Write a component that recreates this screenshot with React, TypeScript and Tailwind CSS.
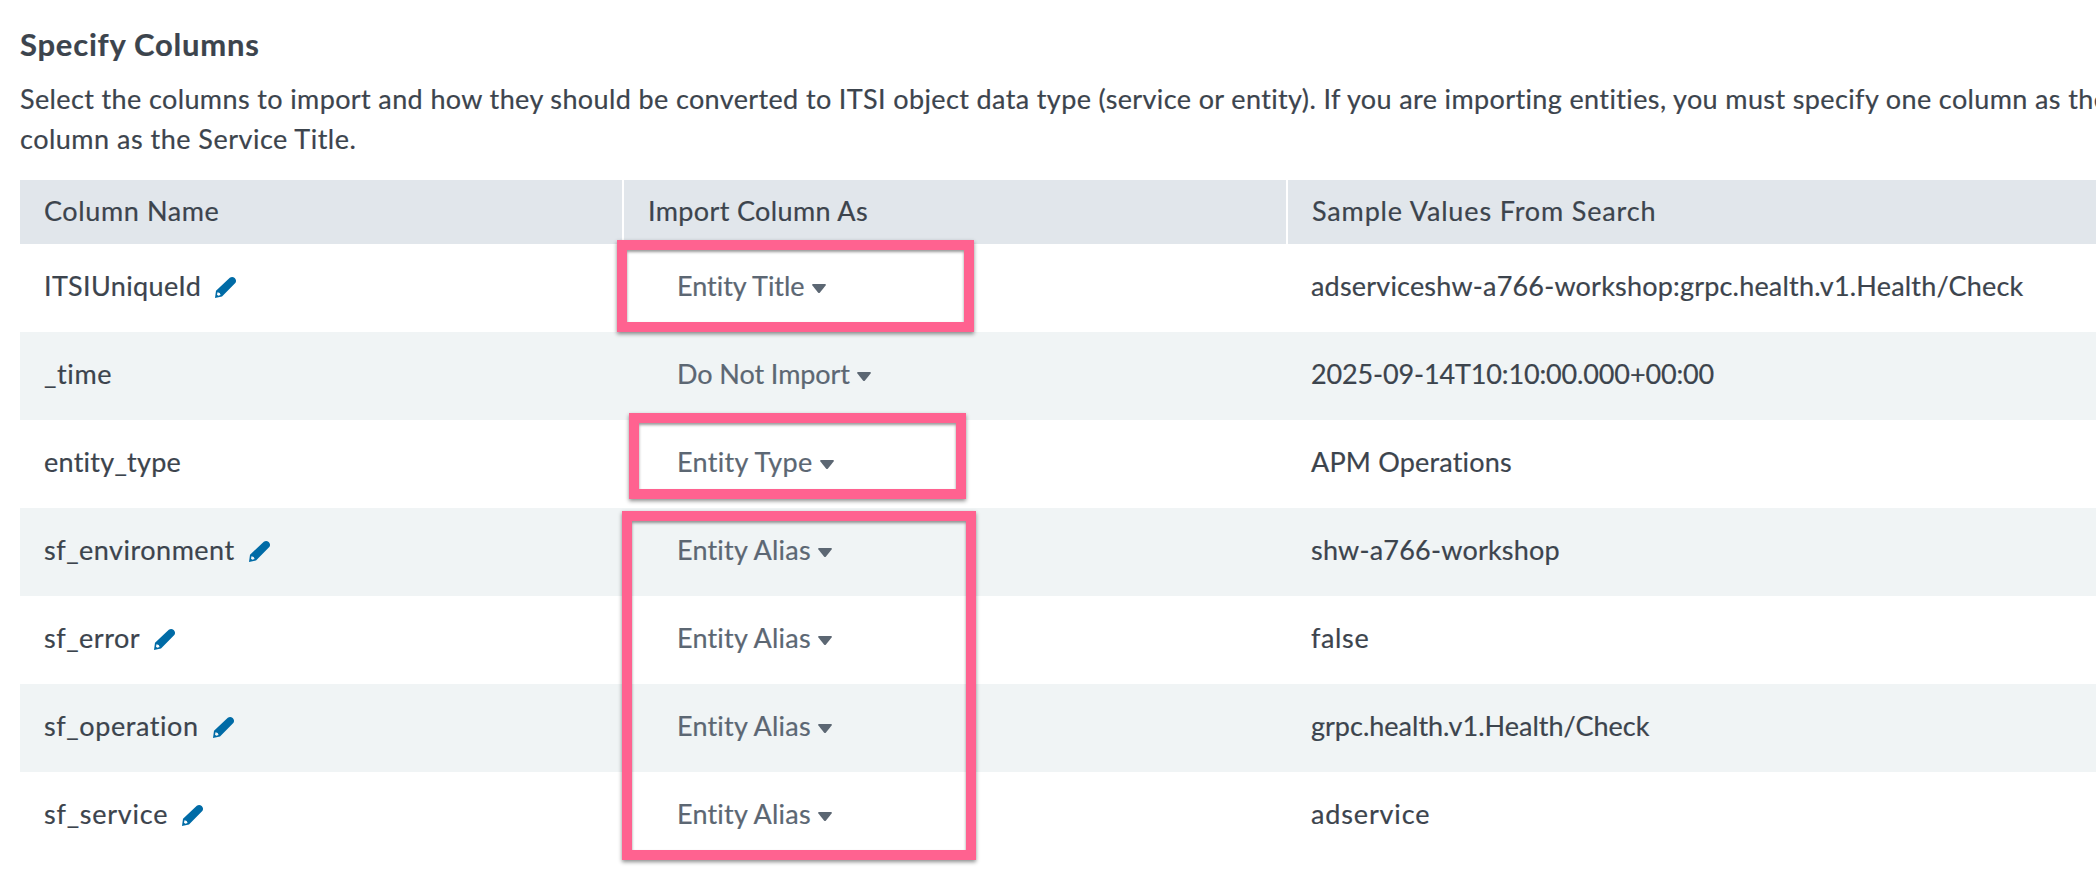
type Row = {
  name: string;
  nameClass: string;
  editable?: boolean;
  importAs: string;
  importClass: string;
  sample: string;
  sampleClass: string;
};

const alias = { importAs: "Entity Alias", importClass: "tracking-[0.2px]" };

const rows: Row[] = [
  { name: "ITSIUniqueId", nameClass: "tracking-[0.35px]", editable: true, importAs: "Entity Title", importClass: "tracking-[-0.03px]", sample: "adserviceshw-a766-workshop:grpc.health.v1.Health/Check", sampleClass: "tracking-[0.19px]" },
  { name: "_time", nameClass: "tracking-[0.65px]", importAs: "Do Not Import", importClass: "tracking-[-0.08px]", sample: "2025-09-14T10:10:00.000+00:00", sampleClass: "tracking-[-0.14px]" },
  { name: "entity_type", nameClass: "tracking-[0.25px]", importAs: "Entity Type", importClass: "tracking-[0.3px]", sample: "APM Operations", sampleClass: "tracking-[0.18px]" },
  { name: "sf_environment", nameClass: "tracking-[0.5px]", editable: true, ...alias, sample: "shw-a766-workshop", sampleClass: "tracking-[0.2px]" },
  { name: "sf_error", nameClass: "tracking-[0.5px]", editable: true, ...alias, sample: "false", sampleClass: "tracking-[0.65px]" },
  { name: "sf_operation", nameClass: "tracking-[0.58px]", editable: true, ...alias, sample: "grpc.health.v1.Health/Check", sampleClass: "tracking-normal" },
  { name: "sf_service", nameClass: "tracking-[0.75px]", editable: true, ...alias, sample: "adservice", sampleClass: "tracking-[0.85px]" },
];

function Pencil() {
  return (
    <svg viewBox="0 0 21 21" className="mb-px ml-[14px] h-[21px] w-[21px] shrink-0" aria-hidden="true">
      <path
        fill="#006ba6"
        fillRule="evenodd"
        d="M14.8.8Q17.4-.9 19.7 1.1 22 3.6 20.3 6.1L7 19.4 0 21 1 13.7ZM2.5 15.3 2 17.8 3.3 18.8 5.6 18 4.7 15.9Z"
      />
    </svg>
  );
}

function Caret() {
  return (
    <svg viewBox="0 0 14 9" className="h-[9px] w-[14px] shrink-0" aria-hidden="true">
      <path fill="#5c6773" d="M1 0h12q1.4.3.6 1.4L8 8.4q-1 1-2 0L.4 1.4Q-.4.3 1 0Z" />
    </svg>
  );
}

function Highlight({ className }: { className: string }) {
  return (
    <div
      className={`pointer-events-none absolute border-10 border-[#ff6290] shadow-[0_2px_4px_rgba(0,0,0,0.45),inset_0_2px_3px_rgba(0,0,0,0.4)] ${className}`}
    />
  );
}

const columns = "grid grid-cols-[602px_662px_1fr]";

export default function App() {
  return (
    <div className="relative h-[878px] w-full overflow-hidden bg-white pt-[24px] pl-5 font-['Lato',sans-serif] text-[27px] text-[#3c444d] [-webkit-text-stroke:0.2px] [font-variant-ligatures:none]">
      <h1 className="text-[31px] leading-10 font-bold tracking-[0.77px]">Specify Columns</h1>
      <p className="mt-[15px] leading-10 whitespace-nowrap">
        <span className="block tracking-[0.375px]">
          Select the columns to import and how they should be converted to ITSI object data type (service or entity). If you are importing entities, you must specify one column as the
        </span>
        <span className="block tracking-[0.49px]">column as the Service Title.</span>
      </p>

      <div className="mt-[21px]">
        <div className={`${columns} gap-x-[2px] leading-[61px]`}>
          <div className="h-16 bg-[#e1e6eb] pl-6 tracking-[0.6px]">Column Name</div>
          <div className="h-16 bg-[#e1e6eb] pl-6 tracking-[0.36px]">Import Column As</div>
          <div className="h-16 bg-[#e1e6eb] pl-6 tracking-[0.85px]">Sample Values From Search</div>
        </div>
        {rows.map((row) => (
          <div key={row.name} className={`${columns} h-[88px] gap-x-[2px] odd:bg-[#f0f4f5]`}>
            <div className="flex items-center pl-6">
              <span className={`pb-[3px] ${row.nameClass}`}>{row.name}</span>
              {row.editable && <Pencil />}
            </div>
            <div className="flex items-center gap-[7px] pl-[53px] text-[#5c6773]">
              <span className={`pb-[3px] ${row.importClass}`}>{row.importAs}</span>
              <Caret />
            </div>
            <div className="flex items-center pl-[23px]">
              <span className={`pb-[3px] ${row.sampleClass}`}>{row.sample}</span>
            </div>
          </div>
        ))}
      </div>

      <Highlight className="top-[240px] left-[617px] h-[92px] w-[357px]" />
      <Highlight className="top-[413px] left-[629px] h-[86px] w-[337px]" />
      <Highlight className="top-[511px] left-[622px] h-[349px] w-[354px]" />
    </div>
  );
}
